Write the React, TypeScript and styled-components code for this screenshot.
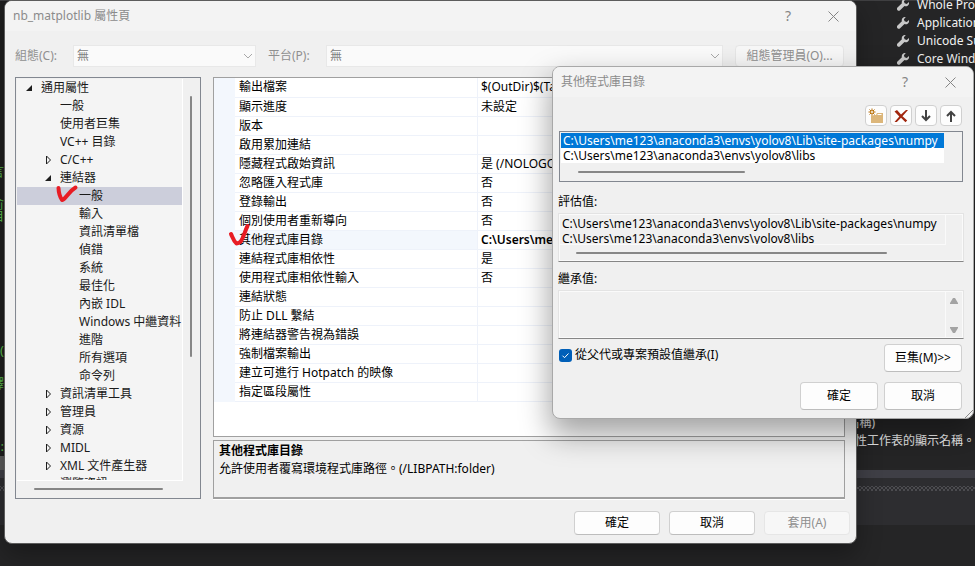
import React from "react";
import styled, { createGlobalStyle, css } from "styled-components";

const Global = createGlobalStyle`
  * { box-sizing: border-box; }
  html, body, #root { height: 100%; }
  body {
    margin: 0;
    overflow: hidden;
    background: #252526;
    color: #000;
    font: 12px/16px "Noto Sans", "Noto Sans CJK TC", sans-serif;
  }
  button, input, select, textarea { font: inherit; }
  ul { list-style: none; margin: 0; padding: 0; }
`;

const Desktop = styled.div`
  position: relative;
  height: 100%;
  min-height: 100vh;
  overflow: hidden;
`;

/* ---------- editor behind the dialogs ---------- */

const Editor = styled.div`
  display: flex;
  flex-direction: column;
  height: 100%;
  background: #252526;
`;

const EditorTop = styled.div`
  display: flex;
  justify-content: space-between;
  height: 470px;
  border-top: 1px solid #3f3f41;
`;

const CodeStrip = styled.div`
  position: relative;
  width: 48px;
  border-bottom: 14px solid #5c5c5c;
  background: #1e1e1e;
  color: #57b94a;
  font-size: 13px;
`;

const CodeGlyph = styled.span<{ $top: number }>`
  position: absolute;
  top: ${(p) => p.$top}px;
  right: 44px;
  white-space: nowrap;
`;

const SheetPane = styled.div`
  display: flex;
  flex-direction: column;
  justify-content: space-between;
  width: 132px;
  padding-bottom: 20px;
  color: #f1f1f1;
`;

const SheetList = styled.ul`
  margin-top: -5px;
  padding-left: 54px;
`;

const SheetItem = styled.li`
  display: flex;
  align-items: center;
  gap: 8px;
  height: 18px;
  white-space: nowrap;

  svg {
    flex: none;
  }
`;

const SheetNote = styled.p<{ $inset?: number }>`
  display: flex;
  justify-content: flex-end;
  margin: 0;
  padding-right: ${(p) => p.$inset ?? 0}px;
  line-height: 18px;
  white-space: nowrap;
`;

const Splitter = styled.div`
  height: 8px;
  background: #3f3f46;
`;

const ToolHeader = styled.div`
  height: 47px;
  padding-top: 8px;
  background: #2d2d30;

  &::before {
    content: "";
    display: block;
    height: 5px;
    background-image: radial-gradient(circle, #4c4c50 30%, transparent 40%),
      radial-gradient(circle, #4c4c50 30%, transparent 40%);
    background-size: 4px 4px;
    background-position: 0 0, 2px 2px;
  }
`;

/* ---------- shared window parts ---------- */

const Window = styled.section`
  position: absolute;
  display: flex;
  flex-direction: column;
  background: #f0f0f0;
  border: 1px solid #a8a8a8;
  border-radius: 8px;
`;

const MainWindow = styled(Window)`
  top: 0;
  left: 4px;
  right: 118px;
  border-color: #5c5c5c;
  box-shadow: 0 12px 24px rgba(0, 0, 0, 0.3);
`;

const PathDialog = styled(Window)`
  top: 66px;
  left: 552px;
  right: 1px;
  box-shadow: 0 14px 30px 2px rgba(0, 0, 0, 0.36);
`;

const TitleBar = styled.header`
  display: flex;
  align-items: center;
  height: 30px;
  padding: 0 10px 0 8px;
  background: #f3f3f3;
  border-radius: 7px 7px 0 0;
  color: #8b8b8b;
`;

const Title = styled.h1`
  flex: 1;
  margin: 0;
  font-size: 12px;
  font-weight: 400;
`;

const CaptionButton = styled.button`
  display: grid;
  place-items: center;
  width: 26px;
  height: 26px;
  margin-left: 19px;
  padding: 0;
  border: 0;
  background: none;
  color: #858585;
  font-size: 14px;
`;

const PushButton = styled.button<{ $tall?: boolean }>`
  width: ${(p) => (p.$tall ? 78 : 86)}px;
  height: ${(p) => (p.$tall ? 28 : 24)}px;
  padding: 0;
  border: 1px solid #d0d0d0;
  border-bottom-color: #bdbdbd;
  border-radius: 4px;
  background: #fdfdfd;
  color: #000;
  white-space: nowrap;

  &:disabled {
    border-color: #e6e6e6;
    background: #f7f7f7;
    color: #8f8f8f;
  }
`;

const ButtonRow = styled.div`
  display: flex;
  justify-content: flex-end;
`;

/* ---------- property pages window ---------- */

const ConfigBar = styled.div`
  display: flex;
  align-items: center;
  padding: 14px 12px 0 10px;
  color: #8f8f8f;
`;

const ConfigLabel = styled.label`
  width: 58px;
  white-space: nowrap;
`;

const SelectBox = styled.div<{ $grow?: boolean }>`
  position: relative;
  ${(p) => (p.$grow ? css`flex: 1;` : css`width: 183px; margin-right: 12px;`)}
  height: 22px;

  svg {
    position: absolute;
    top: 8px;
    right: 3px;
  }
`;

const Select = styled.select`
  width: 100%;
  height: 22px;
  padding: 0 3px;
  appearance: none;
  border: 1px solid #e8e8e8;
  border-radius: 0;
  background: #fafafa;
  color: #808080;
  opacity: 1;
`;

const ManagerButton = styled(PushButton)`
  width: 109px;
  height: 22px;
  margin-left: 12px;
`;

const Panes = styled.div`
  display: flex;
  gap: 12px;
  padding: 10px 11px 0 10px;
`;

const TreePane = styled.nav`
  width: 186px;
  height: 422px;
  padding: 1px;
  border: 1px solid #828790;
  background: #f0f0f0;
`;

const TreeBody = styled.div`
  display: flex;
  height: 402px;
`;

const TreeList = styled.ul`
  flex: 1;
  height: 402px;
  overflow: hidden;
  border-right: 1px solid #fff;
  border-bottom: 1px solid #fff;
  background: #f4f4f4;
`;

const TreeItem = styled.li<{ $level: number; $selected?: boolean }>`
  display: flex;
  align-items: center;
  height: 18px;
  padding-left: ${(p) => 7 + p.$level * 19}px;
  background: ${(p) => (p.$selected ? "#cccedb" : "transparent")};
  color: #1a1a1a;
  white-space: nowrap;
`;

const Twisty = styled.span`
  display: flex;
  width: 17px;
`;

const VScroll = styled.div`
  width: 16px;
  padding: 17px 0 0 7px;
`;

const VThumb = styled.div`
  width: 2px;
  height: 261px;
  border-radius: 1px;
  background: #868686;
`;

const HScroll = styled.div<{ $top: number; $left: number }>`
  padding: ${(p) => p.$top}px 0 0 ${(p) => p.$left}px;
`;

const HThumb = styled.div<{ $width: number }>`
  width: ${(p) => p.$width}px;
  height: 2px;
  border-radius: 1px;
  background: #868686;
`;

const Details = styled.div`
  display: flex;
  flex: 1;
  flex-direction: column;
  gap: 3px;
  min-width: 0;
`;

const GridPane = styled.div`
  height: 360px;
  overflow: hidden;
  border: 1px solid #a0a0a0;
  background: #fff;
`;

const PropertyTable = styled.table`
  width: 100%;
  table-layout: fixed;
  border-collapse: collapse;
  border-left: 21px solid #f3f7fd;
`;

const PropertyName = styled.th`
  width: 253px;
  height: 19px;
  padding: 0 4px;
  border-right: 1px solid #eef2fa;
  border-bottom: 1px solid #eef2fa;
  font-weight: 400;
  text-align: left;
  white-space: nowrap;
`;

const PropertyValue = styled.td<{ $bold?: boolean }>`
  height: 19px;
  padding: 0 3px;
  overflow: hidden;
  border-bottom: 1px solid #eef2fa;
  font-weight: ${(p) => (p.$bold ? 600 : 400)};
  white-space: nowrap;
`;

const PropertyRow = styled.tr<{ $selected?: boolean }>`
  ${PropertyName} {
    background: ${(p) => (p.$selected ? "#f3f7fd" : "#fff")};
  }
`;

const HelpPane = styled.div`
  height: 59px;
  padding: 1px 5px;
  border: 1px solid #a0a0a0;
  border-bottom-width: 2px;
  box-shadow: 0 1px #fff;
  line-height: 18px;
`;

const HelpTitle = styled.h2`
  margin: 0;
  font-size: 12px;
  font-weight: 600;
`;

const HelpText = styled.p`
  margin: 0;
`;

const MainButtons = styled(ButtonRow)`
  gap: 9px;
  padding: 12px 6px 8px;
`;

/* ---------- directory list dialog ---------- */

const DialogBody = styled.div`
  display: flex;
  flex-direction: column;
  padding: 8px 9px 8px 5px;
`;

const IconRow = styled.div`
  display: flex;
  justify-content: flex-end;
  gap: 3px;
  padding: 0 2px 5px 0;
`;

const IconButton = styled.button`
  display: grid;
  place-items: center;
  width: 22px;
  height: 21px;
  padding: 0;
  border: 1px solid #d0d0d0;
  border-radius: 4px;
  background: #fdfdfd;
`;

const PathBox = styled.div`
  height: 51px;
  margin: 0 1px;
  padding: 1px;
  border: 1px solid #828790;
  background: #f0f0f0;
`;

const PathList = styled.ul`
  width: calc(100% - 17px);
  overflow: hidden;
  background: #fff;
`;

const PathItem = styled.li<{ $selected?: boolean }>`
  height: 15px;
  padding-left: 2px;
  background: ${(p) => (p.$selected ? "#0078d7" : "#fff")};
  color: ${(p) => (p.$selected ? "#fff" : "#000")};
  font-size: 12px;
  line-height: 15px;
  white-space: nowrap;
`;

const FieldLabel = styled.label<{ $close?: boolean }>`
  height: ${(p) => (p.$close ? 28 : 31)}px;
  padding-top: 1px;
  line-height: ${(p) => (p.$close ? 32 : 38)}px;
`;

const ValueBox = styled.div`
  display: flex;
  flex-direction: column;
  height: 49px;
  border: 1px solid #e3e3e3;
  border-bottom-color: #868686;
  box-shadow: inset 0 0 0 1px #fafafa;
`;

const ValueText = styled.textarea<{ $tall?: boolean }>`
  display: block;
  width: calc(100% - 17px);
  height: ${(p) => (p.$tall ? 47 : 31)}px;
  padding: 1px 2px 0;
  overflow: hidden;
  resize: none;
  outline: 0;
  border: 1px solid #fafafa;
  background: transparent;
  color: #000;
  line-height: 15px;
  white-space: pre;
`;

const ValueWithArrows = styled(ValueBox)`
  flex-direction: row;
`;

const ArrowColumn = styled.div`
  display: flex;
  flex-direction: column;
  align-items: center;
  justify-content: space-between;
  width: 16px;
  padding: 6px 0 4px;
`;

const InheritRow = styled.div`
  display: flex;
  justify-content: space-between;
  padding: 5px 2px 10px 1px;
`;

const InheritLabel = styled.label`
  display: flex;
  align-items: center;
  gap: 3px;
  height: 22px;
`;

const CheckBox = styled.input`
  width: 13px;
  height: 13px;
  margin: 0;
  appearance: none;
  border-radius: 3px;
  background: #005fb8
    url("data:image/svg+xml,%3Csvg xmlns='http://www.w3.org/2000/svg' width='13' height='13' fill='none' stroke='white'%3E%3Cpath d='M3.5 6.7l2 2 4-4.2'/%3E%3C/svg%3E");
`;

const DialogButtons = styled(ButtonRow)`
  gap: 6px;
  padding-right: 2px;
`;

const Grip = styled.svg`
  position: absolute;
  right: 0;
  bottom: 0;
`;

const Mark = styled.svg<{ $x: number; $y: number }>`
  position: absolute;
  top: ${(p) => p.$y}px;
  left: ${(p) => p.$x}px;
  fill: none;
  stroke: #e81c24;
  stroke-width: 4;
  stroke-linecap: round;
  stroke-linejoin: round;
`;

/* ---------- icons ---------- */

const Wrench = () => (
  <svg width="12" height="12" viewBox="0 0 12 12" fill="#c8c8c8">
    <path d="M8.8.1A3.3 3.3 0 0 0 4.9 4.3L.5 8.6a1.7 1.7 0 0 0 2.6 2.6L7.5 7A3.3 3.3 0 0 0 11.900 3L9.800 5 7.600 4.300 6.900 2.200z" />
  </svg>
);

const CloseIcon = () => (
  <svg width="11" height="11" viewBox="0 0 11 11" fill="none" stroke="#858585">
    <path d="M.5.5l10 10M10.5.5l-10 10" />
  </svg>
);

const Chevron = () => (
  <svg width="10" height="6" viewBox="0 0 10 6" fill="none" stroke="#a8a8a8">
    <path d="M1 1l4 4 4-4" />
  </svg>
);

const OpenTwisty = () => (
  <svg width="10" height="10" viewBox="0 0 10 10">
    <path d="M8 2v6H2z" fill="#1e1e1e" />
  </svg>
);

const ClosedTwisty = () => (
  <svg width="10" height="10" viewBox="0 0 10 10">
    <path d="M3.5 1v8l4-4z" fill="none" stroke="#1e1e1e" />
  </svg>
);

const FolderIcon = () => (
  <svg width="16" height="16" viewBox="0 0 16 16">
    <path d="M3 7h5l1-2h6v10H3z" fill="#dcb67a" />
    <path d="M9.500 6.500h4" stroke="#fff" />
    <circle cx="4" cy="4" r="3.500" fill="#fdfdfd" />
    <path d="M4 .5v2M4 5.500v2M.5 4h2M5.500 4h2M1.500 1.500l1.500 1.500M5 5l1.500 1.500M6.500 1.500L5 3M3 5L1.500 6.500" stroke="#b86f0a" />
    <circle cx="4" cy="4" r="1.500" fill="none" stroke="#c27d1a" />
  </svg>
);

const DeleteIcon = () => (
  <svg width="16" height="16" viewBox="0 0 16 16" fill="#a1260d">
    <path d="M1.500 3.500L4 2l4 4.500L13 2h2L9.500 8.200l4.700 4.300-1.700 1.700L8 9.800 3.800 14H1.500l4.800-5.500z" />
  </svg>
);

const ArrowIcon = ({ up = false }: { up?: boolean }) => (
  <svg width="16" height="16" viewBox="0 0 16 16" fill="none" stroke="#424242" strokeWidth="2">
    {up ? <path d="M8 14V4M4 8l4-4 4 4" /> : <path d="M8 2v10M4 8l4 4 4-4" />}
  </svg>
);

const ScrollArrow = ({ down = false }: { down?: boolean }) => (
  <svg width="10" height="8" viewBox="0 0 10 8">
    <path d={down ? "M1 1h8v1L6 7H4L1 2z" : "M1 7h8V6L6 1H4L1 6z"} fill="#a3a3a3" />
  </svg>
);

/* ---------- data ---------- */

type Node = { text: string; level: number; state?: "open" | "closed"; selected?: boolean };

const tree: Node[] = [
  { text: "通用屬性", level: 0, state: "open" },
  { text: "一般", level: 1 },
  { text: "使用者巨集", level: 1 },
  { text: "VC++ 目錄", level: 1 },
  { text: "C/C++", level: 1, state: "closed" },
  { text: "連結器", level: 1, state: "open" },
  { text: "一般", level: 2, selected: true },
  { text: "輸入", level: 2 },
  { text: "資訊清單檔", level: 2 },
  { text: "偵錯", level: 2 },
  { text: "系統", level: 2 },
  { text: "最佳化", level: 2 },
  { text: "內嵌 IDL", level: 2 },
  { text: "Windows 中繼資料", level: 2 },
  { text: "進階", level: 2 },
  { text: "所有選項", level: 2 },
  { text: "命令列", level: 2 },
  { text: "資訊清單工具", level: 1, state: "closed" },
  { text: "管理員", level: 1, state: "closed" },
  { text: "資源", level: 1, state: "closed" },
  { text: "MIDL", level: 1, state: "closed" },
  { text: "XML 文件產生器", level: 1, state: "closed" },
  { text: "瀏覽資訊", level: 1 },
];

const SELECTED = "其他程式庫目錄";

const properties: [string, string][] = [
  ["輸出檔案", "$(OutDir)$(TargetName)"],
  ["顯示進度", "未設定"],
  ["版本", ""],
  ["啟用累加連結", ""],
  ["隱藏程式啟始資訊", "是 (/NOLOGO)"],
  ["忽略匯入程式庫", "否"],
  ["登錄輸出", "否"],
  ["個別使用者重新導向", "否"],
  [SELECTED, "C:\\Users\\me123"],
  ["連結程式庫相依性", "是"],
  ["使用程式庫相依性輸入", "否"],
  ["連結狀態", ""],
  ["防止 DLL 繫結", ""],
  ["將連結器警告視為錯誤", ""],
  ["強制檔案輸出", ""],
  ["建立可進行 Hotpatch 的映像", ""],
  ["指定區段屬性", ""],
];

const paths = [
  "C:\\Users\\me123\\anaconda3\\envs\\yolov8\\Lib\\site-packages\\numpy",
  "C:\\Users\\me123\\anaconda3\\envs\\yolov8\\libs",
];

const sheets = ["Whole Program", "Application", "Unicode Support", "Core Windows"];

const WindowTitle = ({ text }: { text: string }) => (
  <TitleBar>
    <Title>{text}</Title>
    <CaptionButton aria-label="說明">?</CaptionButton>
    <CaptionButton aria-label="關閉">
      <CloseIcon />
    </CaptionButton>
  </TitleBar>
);

export default function App() {
  return (
    <Desktop>
      <Global />
      <Editor>
        <EditorTop>
          <CodeStrip>
            <CodeGlyph $top={162}>言</CodeGlyph>
            <CodeGlyph $top={194}>俞</CodeGlyph>
            <CodeGlyph $top={206}>自</CodeGlyph>
            <CodeGlyph $top={341}>(</CodeGlyph>
            <CodeGlyph $top={374}>釋</CodeGlyph>
            <CodeGlyph $top={437}>:</CodeGlyph>
          </CodeStrip>
          <SheetPane>
            <SheetList>
              {sheets.map((s) => (
                <SheetItem key={s}>
                  <Wrench />
                  {s}
                </SheetItem>
              ))}
            </SheetList>
            <div>
              <SheetNote $inset={100}>(名稱)</SheetNote>
              <SheetNote>指定屬性工作表的顯示名稱。</SheetNote>
            </div>
          </SheetPane>
        </EditorTop>
        <Splitter />
        <ToolHeader />
      </Editor>

      <MainWindow aria-label="nb_matplotlib 屬性頁">
        <WindowTitle text="nb_matplotlib 屬性頁" />
        <ConfigBar>
          <ConfigLabel htmlFor="config">組態(C):</ConfigLabel>
          <SelectBox>
            <Select id="config" disabled>
              <option>無</option>
            </Select>
            <Chevron />
          </SelectBox>
          <ConfigLabel htmlFor="platform">平台(P):</ConfigLabel>
          <SelectBox $grow>
            <Select id="platform" disabled>
              <option>無</option>
            </Select>
            <Chevron />
          </SelectBox>
          <ManagerButton disabled>組態管理員(O)...</ManagerButton>
        </ConfigBar>
        <Panes>
          <TreePane>
            <TreeBody>
              <TreeList role="tree">
                {tree.map((n, i) => (
                  <TreeItem key={i} role="treeitem" $level={n.level} $selected={n.selected}>
                    <Twisty>
                      {n.state === "open" && <OpenTwisty />}
                      {n.state === "closed" && <ClosedTwisty />}
                    </Twisty>
                    {n.text}
                  </TreeItem>
                ))}
              </TreeList>
              <VScroll>
                <VThumb />
              </VScroll>
            </TreeBody>
            <HScroll $top={7} $left={17}>
              <HThumb $width={129} />
            </HScroll>
          </TreePane>
          <Details>
            <GridPane>
              <PropertyTable>
                <tbody>
                  {properties.map(([name, value]) => (
                    <PropertyRow key={name} $selected={name === SELECTED}>
                      <PropertyName scope="row">{name}</PropertyName>
                      <PropertyValue $bold={name === SELECTED}>{value}</PropertyValue>
                    </PropertyRow>
                  ))}
                </tbody>
              </PropertyTable>
            </GridPane>
            <HelpPane>
              <HelpTitle>{SELECTED}</HelpTitle>
              <HelpText>允許使用者覆寫環境程式庫路徑。(/LIBPATH:folder)</HelpText>
            </HelpPane>
          </Details>
        </Panes>
        <MainButtons>
          <PushButton>確定</PushButton>
          <PushButton>取消</PushButton>
          <PushButton disabled>套用(A)</PushButton>
        </MainButtons>
      </MainWindow>

      <Mark $x={54} $y={182} width="26" height="22" viewBox="0 0 26 22">
        <path d="M4.500 6c.2 5 1.500 9 3.500 12C12 17 14 10 21.500 5.500" />
      </Mark>
      <Mark $x={226} $y={221} width="26" height="26" viewBox="0 0 26 26">
        <path d="M5 13c1.500 3 2.500 7 5.500 9.500C17 22 17.500 13 21.500 5" />
      </Mark>

      <PathDialog role="dialog" aria-label={SELECTED}>
        <WindowTitle text={SELECTED} />
        <DialogBody>
          <IconRow>
            <IconButton aria-label="新增行">
              <FolderIcon />
            </IconButton>
            <IconButton aria-label="刪除">
              <DeleteIcon />
            </IconButton>
            <IconButton aria-label="下移">
              <ArrowIcon />
            </IconButton>
            <IconButton aria-label="上移">
              <ArrowIcon up />
            </IconButton>
          </IconRow>
          <PathBox>
            <PathList role="listbox">
              {paths.map((p, i) => (
                <PathItem key={p} role="option" aria-selected={i === 0} $selected={i === 0}>
                  {p}
                </PathItem>
              ))}
            </PathList>
            <HScroll $top={8} $left={17}>
              <HThumb $width={167} />
            </HScroll>
          </PathBox>
          <FieldLabel htmlFor="evaluated">評估值:</FieldLabel>
          <ValueBox>
            <ValueText id="evaluated" readOnly value={paths.join("\n")} />
            <HScroll $top={7} $left={17}>
              <HThumb $width={311} />
            </HScroll>
          </ValueBox>
          <FieldLabel htmlFor="inherited" $close>
            繼承值:
          </FieldLabel>
          <ValueWithArrows>
            <ValueText id="inherited" readOnly value="" $tall />
            <ArrowColumn>
              <ScrollArrow />
              <ScrollArrow down />
            </ArrowColumn>
          </ValueWithArrows>
          <InheritRow>
            <InheritLabel>
              <CheckBox type="checkbox" defaultChecked />
              從父代或專案預設值繼承(I)
            </InheritLabel>
            <PushButton $tall>巨集(M)&gt;&gt;</PushButton>
          </InheritRow>
          <DialogButtons>
            <PushButton $tall>確定</PushButton>
            <PushButton $tall>取消</PushButton>
          </DialogButtons>
        </DialogBody>
        <Grip width="9" height="9" viewBox="0 0 9 9" stroke="#8a8a8a">
          <path d="M1 9l8-8M5 9l4-4" />
        </Grip>
      </PathDialog>
    </Desktop>
  );
}
